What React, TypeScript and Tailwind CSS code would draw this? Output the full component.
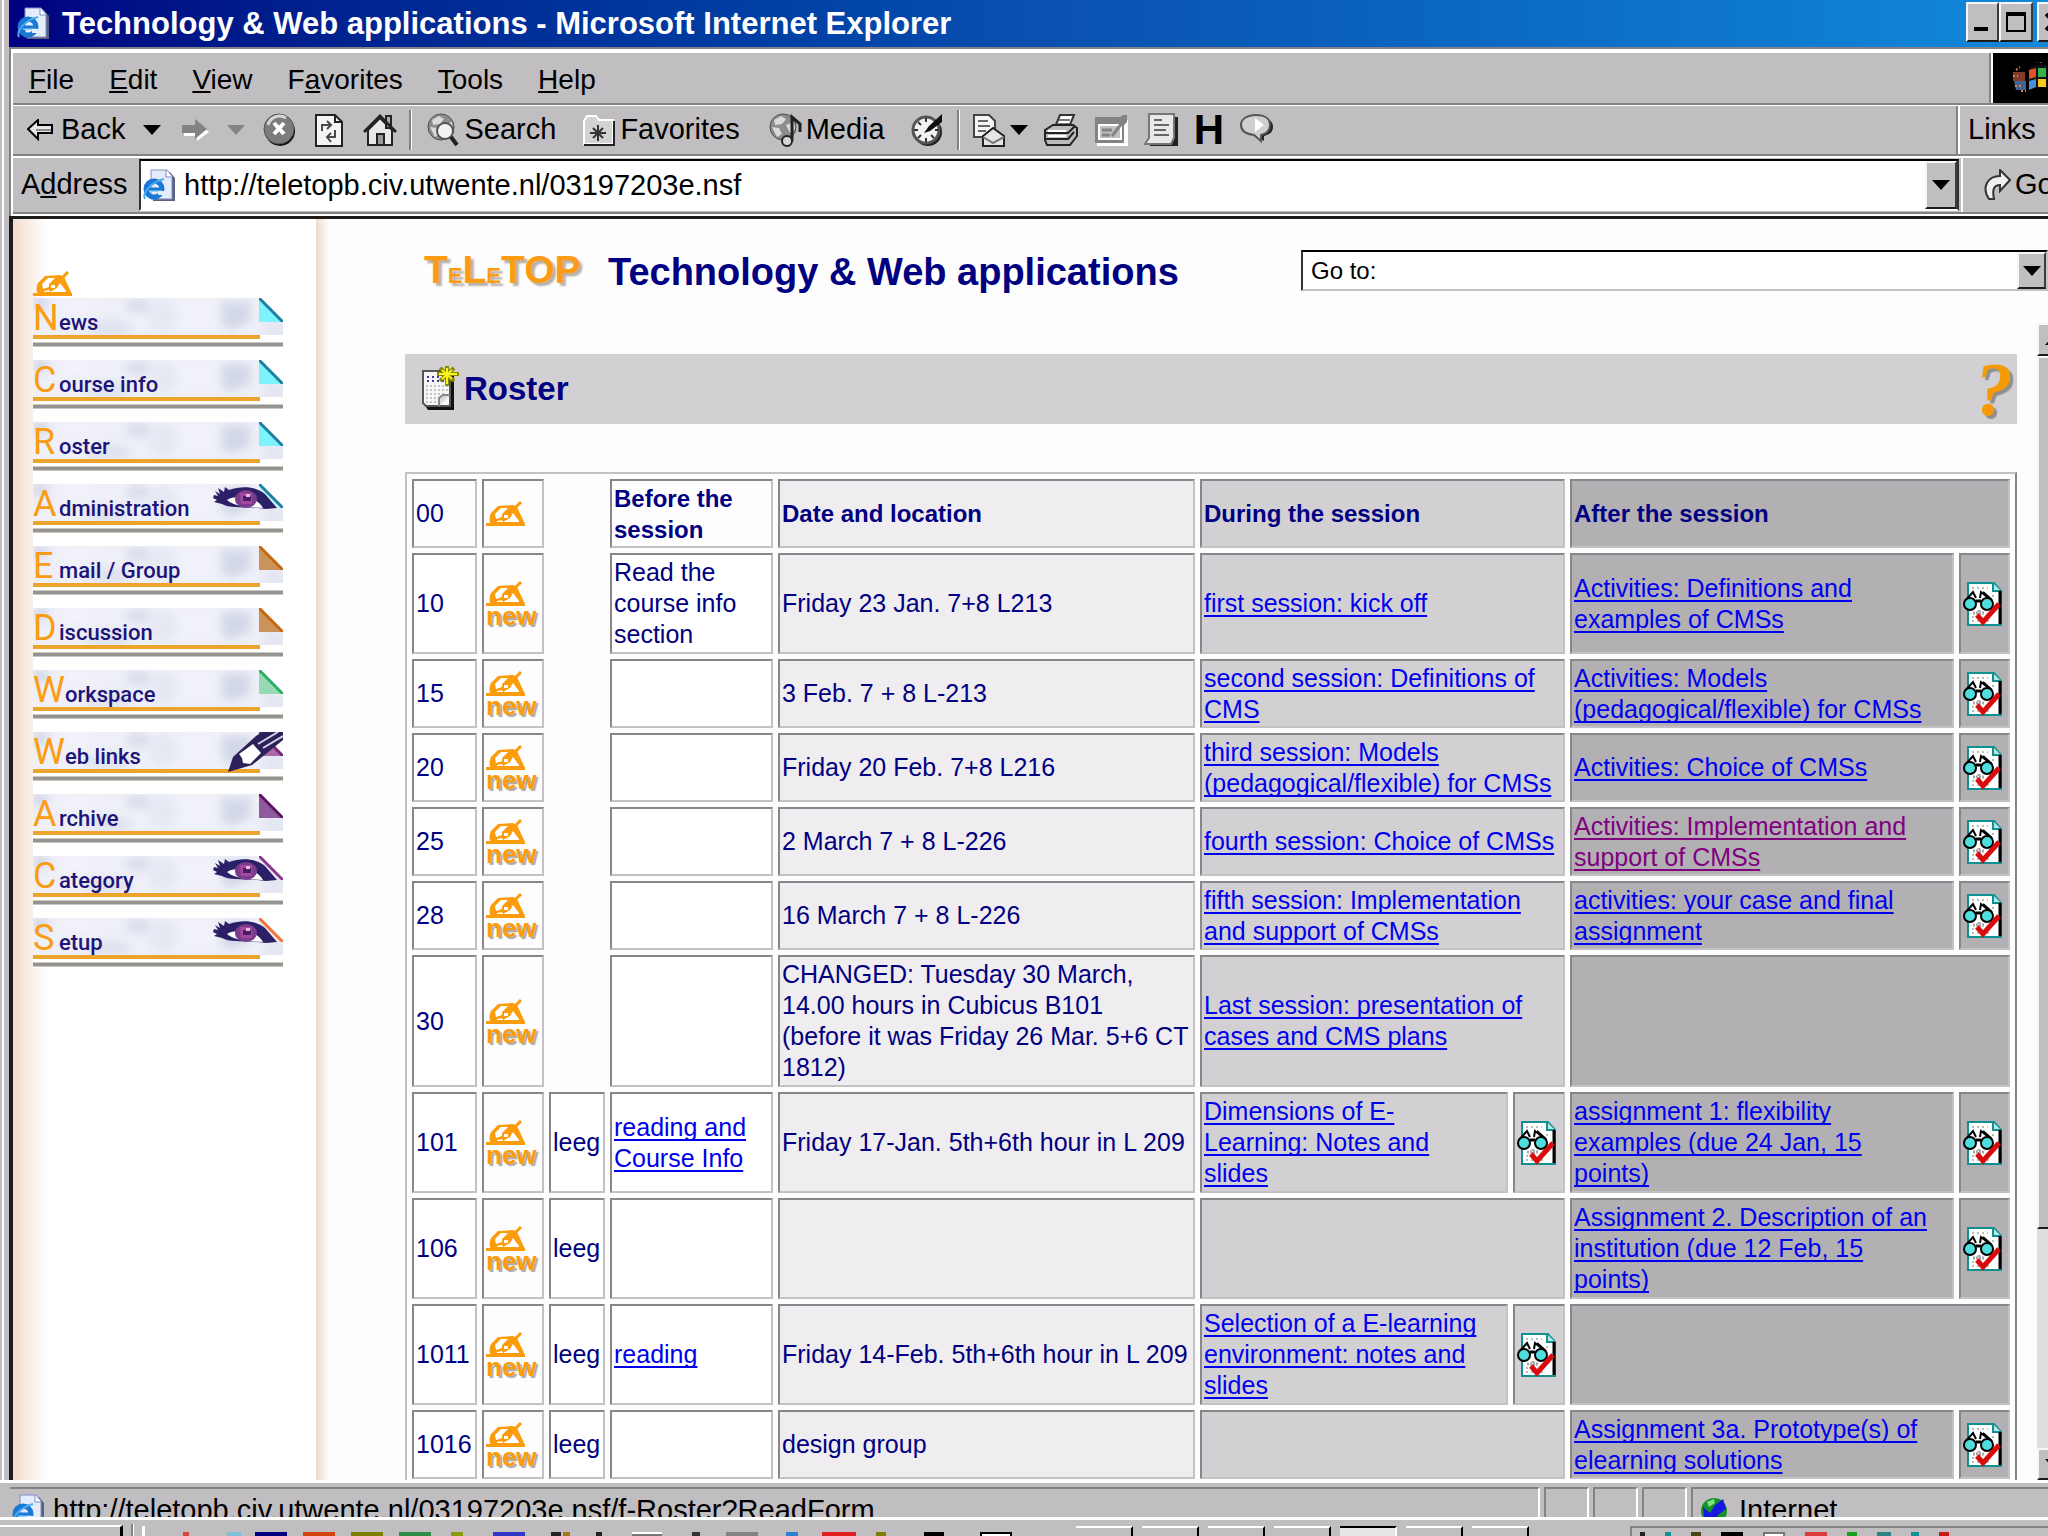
import type { ReactNode } from "react";

type Session = {
  nr: string;
  lines: 2 | 3 | 4;
  leeg?: boolean;
  before?: string;
  beforeLink?: boolean;
  date?: string;
  during?: string;
  duringCheck?: boolean;
  after?: string;
  afterCheck?: boolean;
  visited?: boolean;
};

const sessions: Session[] = [
  { nr: "10", lines: 3, before: "Read the\ncourse info\nsection", date: "Friday 23 Jan. 7+8 L213", during: "first session: kick off", after: "Activities: Definitions and\nexamples of CMSs", afterCheck: true },
  { nr: "15", lines: 2, date: "3 Feb. 7 + 8 L-213", during: "second session: Definitions of\nCMS", after: "Activities: Models\n(pedagogical/flexible) for CMSs", afterCheck: true },
  { nr: "20", lines: 2, date: "Friday 20 Feb. 7+8 L216", during: "third session: Models\n(pedagogical/flexible) for CMSs", after: "Activities: Choice of CMSs", afterCheck: true },
  { nr: "25", lines: 2, date: "2 March 7 + 8 L-226", during: "fourth session: Choice of CMSs", after: "Activities: Implementation and\nsupport of CMSs", afterCheck: true, visited: true },
  { nr: "28", lines: 2, date: "16 March 7 + 8 L-226", during: "fifth session: Implementation\nand support of CMSs", after: "activities: your case and final\nassignment", afterCheck: true },
  { nr: "30", lines: 4, date: "CHANGED: Tuesday 30 March,\n14.00 hours in Cubicus B101\n(before it was Friday 26 Mar. 5+6 CT\n1812)", during: "Last session: presentation of\ncases and CMS plans" },
  { nr: "101", lines: 3, leeg: true, before: "reading and\nCourse Info", beforeLink: true, date: "Friday 17-Jan. 5th+6th hour in L 209", during: "Dimensions of E-\nLearning: Notes and\nslides", duringCheck: true, after: "assignment 1: flexibility\nexamples (due 24 Jan, 15\npoints)", afterCheck: true },
  { nr: "106", lines: 3, leeg: true, after: "Assignment 2. Description of an\ninstitution (due 12 Feb, 15\npoints)", afterCheck: true },
  { nr: "1011", lines: 3, leeg: true, before: "reading", beforeLink: true, date: "Friday 14-Feb. 5th+6th hour in L 209", during: "Selection of a E-learning\nenvironment: notes and\nslides", duringCheck: true },
  { nr: "1016", lines: 2, leeg: true, date: "design group", after: "Assignment 3a. Prototype(s) of\nelearning solutions", afterCheck: true },
];

const rowHeight = { 2: "h-[69px]", 3: "h-[101px]", 4: "h-[132px]" };

const navItems = [
  { first: "N", rest: "ews", fold: "#7df3fb", edge: "#1d7fa3" },
  { first: "C", rest: "ourse info", fold: "#7df3fb", edge: "#1d7fa3" },
  { first: "R", rest: "oster", fold: "#7df3fb", edge: "#1d7fa3" },
  { first: "A", rest: "dministration", fold: "#c9f7fb", edge: "#1d7fa3", art: "eye" },
  { first: "E", rest: "mail / Group", fold: "#c9935a", edge: "#c4690f" },
  { first: "D", rest: "iscussion", fold: "#c9935a", edge: "#c4690f" },
  { first: "W", rest: "orkspace", fold: "#98d9b5", edge: "#2fae66" },
  { first: "W", rest: "eb links", fold: "#a86aa8", edge: "#7a2279", art: "pencil" },
  { first: "A", rest: "rchive", fold: "#8d5a9c", edge: "#5e1263" },
  { first: "C", rest: "ategory", fold: "#f1e6f4", edge: "#8a3a8c", art: "eye" },
  { first: "S", rest: "etup", fold: "#f3e3df", edge: "#f2743c", art: "eye" },
];

const raised =
  "bg-[#c0bec1] border-2 border-t-[#f6f6f6] border-l-[#f6f6f6] border-r-[#3c3c3c] border-b-[#1c1c1c]";

/* ---------- icons ---------- */

const PageE = ({ className = "" }: { className?: string }) => (
  <svg viewBox="0 0 33 33" className={"h-[33px] w-[33px] shrink-0 " + className}>
    <path d="M10 3h17l5 6v23H10z" fill="#5a5f80" />
    <path d="M8 1h16l5 6v23H8z" fill="#e4ecfb" stroke="#7f8fc4" />
    <path d="M23 1v7h6" fill="#fff" stroke="#7f8fc4" />
    <ellipse cx="11" cy="20" rx="8" ry="8" fill="none" stroke="#1878d4" strokeWidth="5" />
    <path d="M6 19h13v4H6z" fill="#8fd6fb" />
    <path d="M4 20h15" stroke="#1878d4" strokeWidth="3" />
    <path d="M15 22h7v4h-7z" fill="#e4ecfb" />
    <path d="M2 30C-1 24 8 13 21 10" fill="none" stroke="#4aa9ef" strokeWidth="2" />
  </svg>
);

const Hand = () => (
  <svg viewBox="0 0 39 25" className="block h-[25px] w-[39px]">
    <path d="M0 22h39v3H0z" fill="#fb9c0c" />
    <path d="M5 23c-2-3-2-7 0-11l7-7 15-1 4 2 8 17h-4z" fill="#fb9c0c" />
    <path d="M9 13l6-6h7l-6 6v3l-6 2z" fill="#fff" />
    <path d="M18 14h4v3h-4z" fill="#fff" />
    <path d="M27 12l6 8v1H17l7-4z" fill="#fff" />
    <path d="M11 20l5-1 1 2h-6z" fill="#fff" />
    <path d="M24 12L35 1" stroke="#fb9c0c" strokeWidth="3" fill="none" />
  </svg>
);

const CheckDoc = () => (
  <svg viewBox="0 0 39 44" className="block h-[44px] w-[39px]">
    <path d="M5 1h26l7 8v34H5z" fill="#fff" stroke="#109090" strokeWidth="2" />
    <path d="M30 1v8h8" fill="#b6e8e8" stroke="#109090" strokeWidth="2" />
    <path d="M37 9v33" stroke="#000" strokeWidth="3" />
    <path d="M9 6h16M9 35h5M29 14h4M31 28h4M9 39h20" stroke="#bcbcbc" strokeWidth="2" strokeDasharray="2 3" />
    <path d="M10 31h12M16 28v6" stroke="#a8a8a8" strokeWidth="3" strokeDasharray="2 1" />
    <path d="M2 19L10 10l3 6M28 18L18 10l-1 6M20 10l9 8" fill="none" stroke="#000" strokeWidth="2" />
    <circle cx="7" cy="22" r="6" fill="#4fdede" stroke="#000" strokeWidth="2" />
    <circle cx="24" cy="22" r="6" fill="#4fdede" stroke="#000" strokeWidth="2" />
    <path d="M13 19h5" stroke="#000" strokeWidth="3" />
    <path d="M14 33l6 7 16-18" fill="none" stroke="#d80c0c" strokeWidth="5" />
  </svg>
);

const Eye = () => (
  <svg viewBox="0 0 66 25" className="absolute right-[4px] top-[1px] h-[25px] w-[66px]">
    <path d="M1 10l4 1-3-5 5 3-2-6 6 4 1-5 4 3c14-5 28-3 36 4l12 14-11 1c-18-3-36 0-44-5l-8-2 3-2-4-2z" fill="#2b2068" />
    <path d="M14 15c6-5 30-5 36 8-14-1-28-1-36-8z" fill="#fff" />
    <ellipse cx="33" cy="14" rx="11" ry="9" fill="#7a3c8c" />
    <path d="M27 8h12v11H28z" fill="#a3479f" />
    <path d="M30 11h8v5h-8z" fill="#4a1d6a" />
    <path d="M33 9h4v3h-4z" fill="#e9b9e2" />
  </svg>
);

const Pencil = () => (
  <svg viewBox="0 0 55 41" className="absolute right-0 top-0 h-[41px] w-[55px]">
    <path d="M0 40l5-15L28 4 34 0h21v8L24 33z" fill="#2c2159" />
    <path d="M11 22l14-10 8 9-11 11-7-1-1-5z" fill="#fff" />
    <path d="M30 12L50 0M35 16L55 4" stroke="#d7d2ea" strokeWidth="2" />
  </svg>
);

const Caret = ({ className = "" }: { className?: string }) => (
  <svg viewBox="0 0 18 10" className={"h-[10px] w-[18px] shrink-0 " + className}>
    <path d="M0 0h18L9 10z" fill="currentColor" />
  </svg>
);

const Tool = ({ className = "", children }: { className?: string; children: ReactNode }) => (
  <svg viewBox="0 0 34 34" className={"h-[34px] w-[34px] shrink-0 " + className}>
    {children}
  </svg>
);

const GlobeArt = () => (
  <g>
    <circle cx="15" cy="14" r="13" fill="#8d8d8d" stroke="#4e4e4e" />
    <path d="M6 7l7-4 5 3-4 5-7 1zM4 14l7 1 3 6-5 3zM18 12l8-3 1 7-5 4z" fill="#dadada" />
  </g>
);

/* ---------- browser chrome ---------- */

const TitleBar = () => (
  <div className="flex h-[47px] shrink-0 items-center bg-linear-to-r from-[#000080] via-[#0b4fb0] to-[#1289da] pl-2">
    <PageE />
    <h1 className="ml-3 flex-1 whitespace-nowrap text-[31px] font-bold leading-[44px] text-white">
      Technology &amp; Web applications - Microsoft Internet Explorer
    </h1>
    <div className="flex h-[42px] w-[82px] shrink-0 self-start overflow-hidden pt-[2px]">
      <button aria-label="Minimize" className={"flex w-[33px] shrink-0 items-end pb-[9px] pl-[6px] " + raised}>
        <span className="h-[4px] w-[14px] bg-black" />
      </button>
      <button aria-label="Maximize" className={"flex w-[34px] shrink-0 items-center justify-center " + raised}>
        <span className="h-[20px] w-[20px] border-2 border-t-4 border-black" />
      </button>
      <button aria-label="Close" className={"ml-[4px] flex w-[34px] shrink-0 items-center justify-center " + raised}>
        <svg viewBox="0 0 18 18" className="h-[18px] w-[18px]">
          <path d="M1 1l16 16M17 1L1 17" stroke="#000" strokeWidth="4" />
        </svg>
      </button>
    </div>
  </div>
);

const MenuBar = () => (
  <div className="flex h-[52px] shrink-0 border-b-2 border-b-[#848284] bg-[#c0bec1]">
    <nav className="flex flex-1 items-center gap-[35px] border-r-2 border-[#848284] pl-4 pt-[3px] text-[28px]">
      <button><u>F</u>ile</button>
      <button><u>E</u>dit</button>
      <button><u>V</u>iew</button>
      <button>F<u>a</u>vorites</button>
      <button><u>T</u>ools</button>
      <button><u>H</u>elp</button>
    </nav>
    <div className="flex w-[57px] items-center justify-end overflow-hidden border-l-2 border-white bg-black">
      <svg viewBox="0 0 36 32" className="h-[32px] w-[36px] shrink-0">
        <path d="M1 10h12v9H1z" fill="#a34a33" opacity=".8" />
        <path d="M2 19h12v9H4z" fill="#4f7cb8" opacity=".8" />
        <path d="M4 8l4-3M1 14h5M3 24h6M9 29h5M24 2l6-2" stroke="#d98250" strokeWidth="2" strokeDasharray="2 2" />
        <path d="M17 5c6-4 12-4 19-3v25c-7-2-13-1-19 2z" fill="#111" stroke="#000" strokeWidth="2" />
        <path d="M17 8l7-2v9l-7 2z" fill="#e0532a" />
        <path d="M26 6l8 0v9h-8z" fill="#35b34a" />
        <path d="M17 19l7-2v8l-7 3z" fill="#4a8ede" />
        <path d="M26 17h8v8h-8z" fill="#f4c91c" />
      </svg>
    </div>
  </div>
);

const Separator = () => (
  <span className="h-[40px] w-[3px] shrink-0 border-l-2 border-[#848284] bg-white" />
);

const ToolBar = () => (
  <div className="flex h-[51px] shrink-0 border-b-2 border-t border-b-[#848284] border-t-white bg-[#c0bec1] text-[29px]">
    <div className="flex flex-1 items-center overflow-hidden whitespace-nowrap border-r-2 border-[#848284] pl-[14px]">
      <button className="flex items-center gap-2">
        <svg viewBox="0 0 26 22" className="h-[22px] w-[26px]">
          <path d="M1 10L11 1v5h14v8H11v6z" fill="#e6e6e6" stroke="#000" strokeWidth="2" />
          <path d="M9 11h15" stroke="#8a8a8a" strokeWidth="2" />
        </svg>
        Back
      </button>
      <Caret className="ml-[18px]" />
      <svg viewBox="0 0 30 24" className="ml-5 h-[24px] w-[30px] shrink-0">
        <path d="M3 10h13V4l12 10-12 9v-5H3z" fill="#fff" />
        <path d="M1 7h13V1l12 10-12 10v-6H1z" fill="#848284" />
      </svg>
      <Caret className="ml-4 text-[#848284]" />
      <Tool className="ml-[18px]">
        <circle cx="17" cy="18" r="15" fill="#111" />
        <circle cx="16" cy="16" r="15" fill="#7c7c7c" stroke="#555" />
        <path d="M5 12a12 12 0 0 1 18-7" stroke="#d6d6d6" strokeWidth="3" fill="none" />
        <path d="M11 10l10 11M21 10L11 21" stroke="#fff" strokeWidth="4" />
      </Tool>
      <Tool className="ml-4">
        <path d="M3 2h19l7 7v24H3z" fill="#f4f4f4" stroke="#222" strokeWidth="2" />
        <path d="M22 2v7h7" fill="none" stroke="#222" strokeWidth="2" />
        <path d="M9 18v-6h8M14 8l4 4-4 4M22 17v7h-7M18 20l-4 4 4 5" fill="none" stroke="#4a4a4a" strokeWidth="2" />
      </Tool>
      <Tool className="ml-4">
        <path d="M5 17v15h24V17L17 5z" fill="#e8e8e8" stroke="#222" strokeWidth="2" />
        <path d="M23 3h5v12h-5z" fill="#aaa" stroke="#222" strokeWidth="2" />
        <path d="M1 19L17 3l16 16" fill="none" stroke="#222" strokeWidth="3" />
        <path d="M14 21h7v11h-7z" fill="#999" stroke="#222" strokeWidth="2" />
      </Tool>
      <span className="w-3" />
      <Separator />
      <button className="ml-[14px] flex items-center gap-1">
        <Tool>
          <GlobeArt />
          <circle cx="19" cy="18" r="8" fill="#f3f3f3" stroke="#555" strokeWidth="2" />
          <path d="M25 24l6 8" stroke="#222" strokeWidth="4" />
        </Tool>
        Search
      </button>
      <button className="ml-[26px] flex items-center gap-1">
        <Tool>
          <path d="M2 8l3-5h9l3 4h14v24H2z" fill="#d2d2d2" stroke="#fff" strokeWidth="2" />
          <path d="M2 32h30V8" fill="none" stroke="#222" strokeWidth="2" />
          <path d="M16 12v16M8 20h16M11 15l10 10M21 15L11 25" stroke="#333" strokeWidth="2" />
        </Tool>
        Favorites
      </button>
      <button className="ml-7 flex items-center gap-1">
        <Tool>
          <GlobeArt />
          <path d="M24 28V4l8 7v8" fill="none" stroke="#222" strokeWidth="3" />
          <circle cx="19" cy="28" r="5" fill="#d5d5d5" stroke="#222" strokeWidth="2" />
        </Tool>
        Media
      </button>
      <Tool className="ml-[26px]">
        <circle cx="17" cy="19" r="14" fill="#222" />
        <circle cx="15" cy="17" r="13" fill="#f2f2f2" stroke="#555" strokeWidth="3" />
        <path d="M15 5v4M15 25v4M3 17h4M24 17h4M7 9l3 3M7 25l3-3M23 25l-3-3" stroke="#333" strokeWidth="2" />
        <path d="M13 20l5-7L31 1v8l-12 9z" fill="#111" />
      </Tool>
      <span className="w-3" />
      <Separator />
      <Tool className="ml-3">
        <path d="M2 2h15l6 6v16H2z" fill="#f4f4f4" stroke="#444" strokeWidth="2" />
        <path d="M6 8h10M6 13h12M6 18h8" stroke="#666" strokeWidth="2" />
        <path d="M11 23l10-8 11 8v10H11z" fill="#e6e6e6" stroke="#222" strokeWidth="2" />
        <path d="M11 24l10 6 11-6" fill="none" stroke="#777" strokeWidth="2" />
      </Tool>
      <Caret className="ml-1" />
      <Tool className="ml-4">
        <path d="M11 14L16 2h14l-5 12z" fill="#fff" stroke="#333" strokeWidth="2" />
        <path d="M15 7h11M14 11h11" stroke="#777" strokeWidth="2" />
        <path d="M1 17l8-5h20l4 3v8l-7 9H3l-2-5z" fill="#bbb" stroke="#222" strokeWidth="2" />
        <path d="M2 20h22l7-7M2 26h22l6-7" fill="none" stroke="#222" strokeWidth="2" />
        <path d="M4 18h18M4 23h18" stroke="#fff" strokeWidth="2" />
      </Tool>
      <Tool className="ml-4">
        <path d="M3 7h31v26H3z" fill="#fff" />
        <path d="M1 4h25l3-2h4v7l-3 3v18H1z" fill="#848284" />
        <path d="M5 12h22v14H5z" fill="#c0bec1" stroke="#fff" strokeWidth="2" />
        <path d="M8 17h10M8 22h8M18 23L28 10" stroke="#848284" strokeWidth="3" />
      </Tool>
      <Tool className="ml-4">
        <path d="M6 4h28v29H6z" fill="#222" />
        <path d="M5 1h25v24l-3 6H1l4-6z" fill="#e8e8e8" stroke="#777" strokeWidth="2" />
        <path d="M10 7h8M10 12h15M10 17h12M10 22h15" stroke="#666" strokeWidth="2" />
      </Tool>
      <b className="ml-4 text-[42px] leading-[42px]">H</b>
      <Tool className="ml-4">
        <path d="M19 4c10 0 14 5 14 10 0 6-5 8-9 9v5l-9-6" fill="#222" />
        <path d="M16 2c9 0 14 4 14 10s-5 9-9 10v6l-7-6C6 21 1 18 1 12S7 2 16 2z" fill="#cfcfcf" stroke="#555" strokeWidth="2" />
        <path d="M15 5l9 7-9 7z" fill="#fff" />
      </Tool>
    </div>
    <div className="flex w-[90px] items-center overflow-hidden border-l-2 border-white pl-2">Links</div>
  </div>
);

const AddressBar = () => (
  <div className="flex h-[58px] shrink-0 items-center border-b-2 border-t-2 border-b-[#848284] border-t-white bg-[#c0bec1] text-[29px]">
    <label htmlFor="address" className="w-[126px] shrink-0 pl-2">A<u>d</u>dress</label>
    <div className="flex h-[52px] flex-1 border-2 border-b-white border-l-[#333] border-r-[#333] border-t-black bg-white">
      <div className="flex flex-1 items-center gap-2 pl-[2px]">
        <PageE />
        <input
          id="address"
          defaultValue="http://teletopb.civ.utwente.nl/03197203e.nsf"
          className="flex-1 bg-transparent pt-[2px] text-[29px] outline-none"
        />
      </div>
      <button aria-label="Show addresses" className={"flex w-[32px] items-center justify-center " + raised}>
        <Caret className="w-[15px]" />
      </button>
    </div>
    <button className="ml-[2px] flex h-full w-[87px] items-center gap-1 overflow-hidden border-l-2 border-white pl-[20px]">
      <svg viewBox="0 0 28 32" className="h-[32px] w-[28px] shrink-0">
        <path d="M17 1l10 10-10 11v-6c-6 0-8 4-6 14H6C-2 18 5 7 17 7z" fill="#efefef" stroke="#333" strokeWidth="2" />
      </svg>
      <span>Go</span>
    </button>
  </div>
);

/* ---------- page ---------- */

const NavButton = ({ item }: { item: (typeof navItems)[number] }) => (
  <a href="#" className="relative mb-3 block h-[50px] w-[250px]">
    <div className="relative h-[37px] bg-[#eeeff7]">
      <svg viewBox="0 0 250 37" className="absolute inset-0 h-full w-full">
        <defs>
          <filter id="soft"><feGaussianBlur stdDeviation="4" /></filter>
        </defs>
        <g filter="url(#soft)" fill="#d3d8e8">
          <path d="M0 0h16l-4 14-12-4z" />
          <ellipse cx="105" cy="8" rx="12" ry="7" opacity=".8" />
          <ellipse cx="75" cy="30" rx="24" ry="8" fill="#dfe3ef" />
          <path d="M189 4h28v20l-20 8-8-6z" />
          <ellipse cx="130" cy="18" rx="14" ry="16" fill="#e6e9f3" />
          <path d="M30 0h30v14H30zM150 4h30v24h-30z" fill="#f3f3fa" />
          <path d="M230 22h24v20h-24z" fill="#e4e6f2" />
        </g>
      </svg>
      <svg viewBox="0 0 24 24" className="absolute right-0 top-0 h-[24px] w-[24px]">
        <path d="M0 0h24v24z" fill="#fff" />
        <path d="M0 0v24h24z" fill={item.fold} />
        <path d="M0 0l24 24" stroke={item.edge} strokeWidth="3" />
      </svg>
      <div className="relative flex items-baseline whitespace-nowrap font-[Roboto,sans-serif] leading-[40px]">
        <span className="min-w-[26px] text-[36px] text-[#fb9c14]">{item.first}</span>
        <span className="text-[22px] font-medium text-[#1d1478]">{item.rest}</span>
      </div>
    </div>
    <div className="relative h-[4px] w-[227px] bg-[#eea42c]" />
    <div className="mt-[3px] h-[5px] border-y border-[#c9c7c4] bg-[#96948f]" />
    {item.art === "eye" && <Eye />}
    {item.art === "pencil" && <Pencil />}
  </a>
);

const SideBar = () => (
  <aside className="flex w-[317px] shrink-0 bg-white">
    <div className="flex-1 bg-linear-to-r from-[#f2dccd] to-white to-[34px] pt-[52px]">
      <div className="ml-5"><Hand /></div>
      <nav className="ml-5 mt-[2px] bg-white">
        {navItems.map((item) => (
          <NavButton key={item.first + item.rest} item={item} />
        ))}
      </nav>
    </div>
    <div className="w-[14px] bg-linear-to-r from-[#eddccd] to-white" />
  </aside>
);

const cell =
  "border-2 border-t-[#88868a] border-l-[#88868a] border-r-[#c3c1c4] border-b-[#c3c1c4] px-[2px] py-0 whitespace-pre text-left";

const NewButton = () => (
  <button aria-label="New item" className="block text-left">
    <Hand />
    <span className="block text-[26px] font-bold leading-[20px] text-[#fb9c0c] [text-shadow:2px_2px_1px_#aaa]">new</span>
  </button>
);

const Cell = ({ text, link, visited, span, bg }: { text?: string; link?: boolean; visited?: boolean; span?: number; bg: string }) => (
  <td colSpan={span} className={cell + " " + bg}>
    {text && link ? (
      <a
        href="#"
        className={
          "underline decoration-2 underline-offset-[3px] [text-decoration-skip-ink:none] " +
          (visited ? "text-[#800080]" : "text-[#0000ee]")
        }
      >
        {text}
      </a>
    ) : (
      text
    )}
  </td>
);

const CheckCell = ({ bg }: { bg: string }) => (
  <td className={cell + " " + bg}>
    <a href="#" aria-label="Results" className="block"><CheckDoc /></a>
  </td>
);

const RosterTable = () => (
  <table className="mt-[48px] w-full table-fixed border-separate border-spacing-[5px] border-2 border-b-[#848284] border-l-[#c3c1c4] border-r-[#848284] border-t-[#c3c1c4] text-[25px] leading-[31px] text-[#000080]">
    <colgroup>
      <col className="w-[65px]" />
      <col className="w-[62px]" />
      <col className="w-[56px]" />
      <col className="w-[163px]" />
      <col className="w-[417px]" />
      <col className="w-[308px]" />
      <col className="w-[52px]" />
      <col />
      <col className="w-[51px]" />
    </colgroup>
    <thead>
      <tr className="h-[69px] text-[24px]">
        <td className={cell + " text-[25px]"}>00</td>
        <td className={cell}><Hand /></td>
        <td />
        <th className={cell}>{"Before the\nsession"}</th>
        <th className={cell + " bg-[#efedf0]"}>Date and location</th>
        <th colSpan={2} className={cell + " bg-[#d2d0d3]"}>During the session</th>
        <th colSpan={2} className={cell + " bg-[#b2b0b3]"}>After the session</th>
      </tr>
    </thead>
    <tbody>
      {sessions.map((s) => (
        <tr key={s.nr} className={rowHeight[s.lines]}>
          <Cell text={s.nr} bg="bg-white" />
          <td className={cell}><NewButton /></td>
          {s.leeg ? <Cell text="leeg" bg="bg-white" /> : <td />}
          <Cell text={s.before} link={s.beforeLink} bg="bg-white" />
          <Cell text={s.date} bg="bg-[#efedf0]" />
          <Cell text={s.during} link span={s.duringCheck ? 1 : 2} bg="bg-[#d2d0d3]" />
          {s.duringCheck && <CheckCell bg="bg-[#d2d0d3]" />}
          <Cell text={s.after} link visited={s.visited} span={s.afterCheck ? 1 : 2} bg="bg-[#b2b0b3]" />
          {s.afterCheck && <CheckCell bg="bg-[#b2b0b3]" />}
        </tr>
      ))}
    </tbody>
  </table>
);

const CourseHeader = () => (
  <header className="flex h-[104px] shrink-0 items-start pl-[94px] pt-[31px]">
    <div className="flex w-[184px] shrink-0 items-baseline text-[39px] font-bold leading-[40px] text-[#fb9c14] [text-shadow:3px_3px_2px_#b5b0a8]">
      T<span className="text-[22px]">E</span>L<span className="text-[22px]">E</span>TOP
    </div>
    <h2 className="w-[693px] shrink-0 whitespace-nowrap text-[38px] font-bold leading-[44px] text-[#000080]">
      Technology &amp; Web applications
    </h2>
    <div className="flex h-[41px] flex-1 border-2 border-b-[#c3c1c4] border-l-[#333] border-r-[#c3c1c4] border-t-black bg-white">
      <select aria-label="Go to" className="flex-1 appearance-none bg-white pl-2 text-[24px] leading-[34px] outline-none">
        <option>Go to:</option>
      </select>
      <span className={"flex w-[29px] items-center justify-center " + raised}>
        <Caret className="w-[15px]" />
      </span>
    </div>
  </header>
);

const SectionBar = () => (
  <div className="mt-[31px] flex h-[70px] items-center bg-[#d2d0d3] pl-[17px] pr-1">
    <svg viewBox="0 0 38 46" className="h-[46px] w-[38px]">
      <path d="M4 8h28v36H6l-2-3z" fill="#111" />
      <path d="M1 5h27v35H4l-3-3z" fill="#f6f6f6" stroke="#555" strokeWidth="2" />
      <path d="M5 11h18M5 15h18" stroke="#3a3aa8" strokeWidth="2" strokeDasharray="2 3" />
      <path d="M4 20h22M4 24h22M4 28h20M4 32h12M4 36h12" stroke="#c4c4c4" strokeWidth="2" strokeDasharray="2 2" />
      <path d="M17 40v-8l4-3h7" fill="#ddd" stroke="#888" strokeWidth="2" />
      <path d="M25 0v20M15 8h22M18 2l14 13M32 2L18 15" stroke="#8a8a00" strokeWidth="4" />
      <path d="M25 2v16M17 8h18M20 4l10 9M30 4l-10 9" stroke="#f7f71c" strokeWidth="2" />
    </svg>
    <h3 className="ml-1 flex-1 text-[33px] font-bold text-[#000080]">Roster</h3>
    <a
      href="#"
      aria-label="Help"
      className="font-['Liberation_Serif',serif] text-[76px] font-bold italic leading-[64px] text-[#f59a04] [text-shadow:3px_3px_1px_#8f8f8f]"
    >
      ?
    </a>
  </div>
);

const ScrollBar = () => (
  <div className="flex w-[11px] shrink-0 flex-col overflow-hidden bg-[#dfdde0]">
    <div className={"flex h-[33px] w-[33px] shrink-0 items-center justify-center " + raised}>
      <Caret className="rotate-180" />
    </div>
    <div className={"h-[873px] w-[33px] shrink-0 " + raised} />
    <div className="flex-1" />
    <div className={"flex h-[32px] w-[33px] shrink-0 items-center justify-center " + raised}>
      <Caret />
    </div>
  </div>
);

/* ---------- bottom of the screen ---------- */

const StatusBar = () => (
  <div className="flex h-[37px] shrink-0 gap-1 overflow-hidden border-t-[3px] border-white bg-[#c0bec1] pl-[10px] pt-[4px] text-[29px] leading-[42px]">
    <div className="flex flex-1 gap-2 overflow-hidden whitespace-nowrap border-r-2 border-t-2 border-r-white border-t-[#848284] pl-[2px]">
      <PageE className="mt-[5px]" />
      http://teletopb.civ.utwente.nl/03197203e.nsf/f-Roster?ReadForm
    </div>
    <div className="w-[45px] border-2 border-b-0 border-l-[#848284] border-r-white border-t-[#848284]" />
    <div className="w-[45px] border-2 border-b-0 border-l-[#848284] border-r-white border-t-[#848284]" />
    <div className="w-[45px] border-2 border-b-0 border-l-[#848284] border-r-white border-t-[#848284]" />
    <div className="flex w-[357px] gap-3 border-l-2 border-t-2 border-[#848284] pl-2">
      <svg viewBox="0 0 26 30" className="mt-[8px] h-[30px] w-[26px]">
        <circle cx="13" cy="14" r="13" fill="#15902b" />
        <path d="M2 10l7 6 5-8 8-6 3 10-8 6-2 8-6 2-6-8z" fill="#1717e0" />
        <path d="M6 5l7-3 1 4-6 4z" fill="#7ee07e" />
      </svg>
      Internet
    </div>
  </div>
);

const Stub = ({ className }: { className: string }) => (
  <span className={"h-[4px] shrink-0 " + className} />
);

const TaskBar = () => (
  <div className="flex h-[19px] shrink-0 items-end overflow-hidden border-t-[3px] border-white bg-[#c0bec1]">
    <button aria-label="Start" className="h-[11px] w-[123px] shrink-0 border-r-[3px] border-t-2 border-r-black border-t-white" />
    <span className="ml-2 h-[12px] w-[3px] shrink-0 border-l-2 border-[#848284] bg-white" />
    <span className="ml-2 h-[10px] w-[3px] shrink-0 bg-white" />
    <div className="flex w-[931px] shrink-0 items-end pl-[38px]">
      <Stub className="w-[6px] bg-[#d9433c]" />
      <Stub className="ml-[38px] w-[14px] bg-[#7cc0dc]" />
      <Stub className="ml-[14px] w-[32px] bg-[#000080]" />
      <Stub className="ml-4 w-[32px] bg-[#cf4410]" />
      <Stub className="ml-4 w-[32px] bg-[#808000]" />
      <Stub className="ml-4 w-[32px] bg-[#2f8c48]" />
      <Stub className="ml-[20px] w-[12px] bg-[#8c9a10]" />
      <Stub className="ml-[30px] w-[32px] bg-[#3038c8]" />
      <Stub className="ml-[26px] w-[10px] bg-[#222]" />
      <Stub className="ml-[2px] w-[7px] bg-[#a07818]" />
      <Stub className="ml-[26px] w-[6px] bg-[#222]" />
      <Stub className="ml-[30px] w-[30px] border-b-2 border-[#777] bg-white" />
      <Stub className="ml-[30px] w-[8px] bg-[#333]" />
      <Stub className="ml-[26px] w-[32px] bg-[#848284]" />
      <Stub className="ml-[28px] w-[12px] bg-[#2f7fd0]" />
      <Stub className="ml-[24px] w-[34px] bg-[#e0201c]" />
      <Stub className="ml-[20px] w-[10px] bg-[#808000]" />
      <Stub className="ml-[38px] w-[20px] border-2 border-black bg-[#109090]" />
      <Stub className="ml-[36px] w-[32px] border-2 border-b-0 border-black bg-white" />
    </div>
    <div className="flex items-end gap-[9px]">
      {[0, 1, 2, 3, 4, 5, 6].map((i) => (
        <button
          key={i}
          aria-label={"Window " + (i + 1)}
          className={
            "h-[10px] w-[57px] border-r-2 border-t-2 " +
            (i === 4 ? "border-r-white border-t-black bg-[#e6e4e7]" : "border-r-black border-t-white bg-[#c0bec1]")
          }
        />
      ))}
    </div>
    <div className="ml-auto flex h-[10px] w-[418px] shrink-0 items-end gap-[20px] border-l-2 border-t-2 border-[#848284] pl-2">
      <Stub className="w-[5px] bg-[#222]" />
      <Stub className="w-[6px] bg-[#109090]" />
      <Stub className="w-[10px] bg-[#4d4416]" />
      <Stub className="w-[22px] bg-black" />
      <Stub className="w-[22px] border-2 border-b-0 border-[#777] bg-white" />
      <Stub className="w-[22px] bg-[#d83c3c]" />
      <Stub className="w-[10px] bg-[#18a018]" />
      <Stub className="w-[14px] bg-[#2c8484]" />
      <Stub className="w-[8px] bg-[#109090]" />
      <Stub className="w-[10px] bg-[#c81818]" />
    </div>
  </div>
);

const App = () => {
  return (
    <div className="flex h-screen flex-col overflow-hidden bg-[#c0bec1] font-['Liberation_Sans',Arial,sans-serif] text-black">
      <div className="flex min-h-0 flex-1">
        <div className="w-[9px] shrink-0 border-l-2 border-[#c0bec1]">
          <div className="h-full border-l-2 border-white" />
        </div>
        <div className="flex min-w-0 flex-1 flex-col">
          <TitleBar />
          <div className="flex shrink-0 flex-col border-l-2 border-t-2 border-[#848284]">
            <div className="flex flex-col border-b-2 border-l-2 border-t-4 border-white">
              <MenuBar />
              <ToolBar />
              <AddressBar />
            </div>
          </div>
          <div className="flex min-h-0 flex-1 border-l-4 border-t-[3px] border-[#1c1c1c] bg-[#fefdfe]">
            <SideBar />
            <main className="flex min-w-0 flex-1 flex-col">
              <CourseHeader />
              <div className="flex min-h-0 flex-1">
                <div className="min-w-0 flex-1 overflow-hidden pl-[75px] pr-5">
                  <SectionBar />
                  <RosterTable />
                </div>
                <ScrollBar />
              </div>
            </main>
          </div>
        </div>
      </div>
      <StatusBar />
      <TaskBar />
    </div>
  );
};

export default App;
